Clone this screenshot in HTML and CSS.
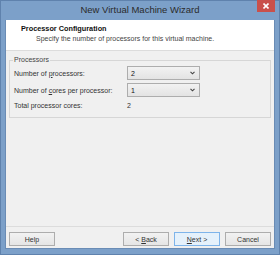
FILE: index.html
```html
<!DOCTYPE html>
<html lang="en">
<head>
  <meta charset="UTF-8">
  <title>New Virtual Machine Wizard</title>
  <link rel="stylesheet" href="styles.css">
</head>
<body>
  <div class="window">
    <div class="titlebar">
      <div class="title-spacer"></div>
      <div class="title">New Virtual Machine Wizard</div>
      <div class="close">
        <svg width="6" height="6" viewBox="0 0 6 6"><path d="M0.5 0.5 L5.5 5.5 M5.5 0.5 L0.5 5.5" stroke="#fff" stroke-width="1.6"/></svg>
      </div>
    </div>
    <div class="content">
      <div class="header">
        <div class="header-title">Processor Configuration</div>
        <div class="header-sub">Specify the number of processors for this virtual machine.</div>
      </div>
      <div class="body">
        <fieldset class="group">
          <legend>Processors</legend>
          <div class="row">
            <span class="label">Number of <u>p</u>rocessors:</span>
            <div class="select"><span>2</span>
              <svg width="5" height="4" viewBox="0 0 5 4"><path d="M0.5 0.8 L2.5 2.8 L4.5 0.8" fill="none" stroke="#444" stroke-width="1.1"/></svg>
            </div>
          </div>
          <div class="row">
            <span class="label">Number of <u>c</u>ores per processor:</span>
            <div class="select"><span>1</span>
              <svg width="5" height="4" viewBox="0 0 5 4"><path d="M0.5 0.8 L2.5 2.8 L4.5 0.8" fill="none" stroke="#444" stroke-width="1.1"/></svg>
            </div>
          </div>
          <div class="row total">
            <span class="label">Total processor cores:</span>
            <span class="value">2</span>
          </div>
        </fieldset>
      </div>
      <div class="footer">
        <button class="btn">Help</button>
        <div class="footer-spacer"></div>
        <button class="btn">&lt; <u>B</u>ack</button>
        <button class="btn primary"><u>N</u>ext &gt;</button>
        <button class="btn">Cancel</button>
      </div>
    </div>
  </div>
</body>
</html>
```

FILE: styles.css
```css
html, body {
  margin: 0;
  padding: 0;
}
body {
  font-family: "Liberation Sans", Arial, sans-serif;
  font-size: 7px;
  color: #333;
  background: #7ca0c9;
}
.window {
  width: 280px;
  height: 255px;
  box-sizing: border-box;
  background: #7ca0c9;
  border: 1px solid #5f82ad;
  display: flex;
  flex-direction: column;
}
.titlebar {
  height: 19px;
  display: flex;
  align-items: flex-start;
  padding: 0 4px 0 0;
}
.title-spacer {
  width: 22px;
}
.title {
  flex: 1;
  text-align: center;
  font-size: 9.5px;
  line-height: 18px;
  color: #2b2b2b;
}
.close {
  width: 18px;
  height: 12px;
  margin-top: -1px;
  background: #c9504b;
  display: flex;
  align-items: center;
  justify-content: center;
}
.content {
  flex: 1;
  margin: 0 4px 5px 4px;
  background: #f0f0f0;
  border: 1px solid #6a8cb5;
  border-top: none;
  display: flex;
  flex-direction: column;
}
.header {
  height: 31px;
  background: #fff;
  border-bottom: 1px solid #dcdcdc;
  box-sizing: border-box;
  padding: 4px 0 0 15px;
}
.header-title {
  font-weight: bold;
  font-size: 7.3px;
  line-height: 10px;
  color: #111;
}
.header-sub {
  padding-left: 15px;
  line-height: 10px;
  color: #444;
}
.body {
  flex: 1;
  padding: 4px 3px 0 3px;
}
.group {
  margin: 0;
  padding: 0 4px 7px 4px;
  border: 1px solid #d6d6d6;
  display: flex;
  flex-direction: column;
  gap: 3px;
}
.group legend {
  padding: 0 1px;
  margin-left: -1px;
  line-height: 10px;
  color: #444;
}
.row {
  display: grid;
  grid-template-columns: 113px 73px;
  align-items: center;
  height: 14px;
}
.row:first-of-type {
  margin-top: 1px;
}
.row.total {
  height: 10px;
}
.label u, .btn u {
  text-decoration-thickness: 1px;
}
.select {
  height: 14px;
  box-sizing: border-box;
  border: 1px solid #adadad;
  background: linear-gradient(#f2f2f2, #e3e3e3);
  display: flex;
  align-items: center;
  justify-content: space-between;
  padding: 0 4px 0 3px;
  color: #111;
}
.value {
  color: #333;
}
.footer {
  border-top: 1px solid #dcdcdc;
  display: flex;
  gap: 5px;
  padding: 5px 3px 2px 3px;
}
.footer-spacer {
  flex: 1;
}
.btn {
  width: 46px;
  height: 14px;
  padding: 0;
  font-family: inherit;
  font-size: 7px;
  color: #333;
  border: 1px solid #adadad;
  background: linear-gradient(#f2f2f2, #e5e5e5);
}
.btn.primary {
  border-color: #7eb4ea;
  background: #e5f1fb;
}
```
